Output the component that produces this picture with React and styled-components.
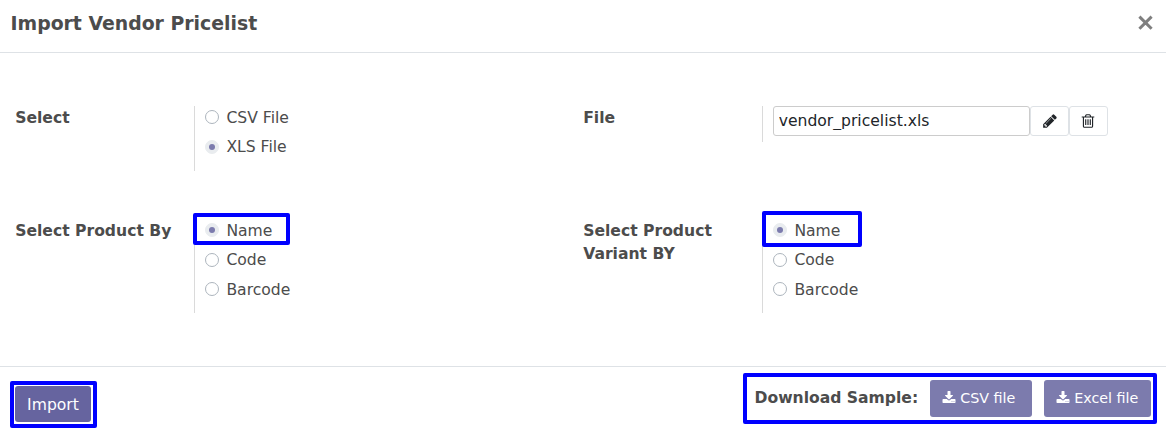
import React from "react";
import styled, { createGlobalStyle } from "styled-components";

const GlobalStyle = createGlobalStyle`
  *, *::before, *::after { box-sizing: border-box; }
  body {
    margin: 0;
    background: #fff;
    color: #4c4c4c;
    font: 15.6px/23px "DejaVu Sans", Verdana, sans-serif;
    overflow: hidden;
  }
  button, input { font: inherit; margin: 0; }
`;

const Dialog = styled.div`
  display: flex;
  flex-direction: column;
  width: 1166px;
  height: 445px;
`;

const Header = styled.header`
  display: flex;
  justify-content: space-between;
  height: 53px;
  padding: 9px 13px 0 10.5px;
  border-bottom: 1px solid #dee2e6;
`;

const Title = styled.h4`
  margin: 0;
  padding-top: 1px;
  font-size: 18.85px;
  line-height: 28px;
  font-weight: bold;
  white-space: nowrap;
`;

const Close = styled.button`
  width: 15px;
  height: 15px;
  margin-top: 6px;
  padding: 0;
  border: 0;
  background: none;
  color: #7f7f7f;
  svg { display: block; }
`;

const Body = styled.main`
  display: grid;
  grid-template-columns: 568px 1fr;
  grid-template-rows: 113px 1fr;
  flex: 1;
  padding: 53px 0 0 15px;
`;

const Field = styled.div`
  display: flex;
  align-items: flex-start;
`;

const FieldLabel = styled.div`
  width: 179px;
  padding: 1px 8px 0 0.2px;
  font-weight: bold;
`;

const FieldValue = styled.div`
  height: ${(p) => p.$height}px;
  padding-left: 10px;
  border-left: 1px solid #dadada;
`;

const Option = styled.label`
  position: relative;
  display: flex;
  align-items: center;
  height: 23px;
  margin-bottom: 6.4px;
  line-height: 25px;
  white-space: nowrap;
`;

const Radio = styled.span`
  display: grid;
  place-items: center;
  width: 14px;
  height: 14px;
  margin-right: 7.4px;
  border: 1px solid ${(p) => (p.$checked ? "#e9ecef" : "#adb5bd")};
  border-radius: 50%;
  background: ${(p) => (p.$checked ? "#e9ecef" : "#fff")};
  ${Option}:first-child > & { margin-bottom: 1px; }
  &::after {
    content: "";
    width: 6px;
    height: 6px;
    border-radius: 50%;
    background: ${(p) => (p.$checked ? "#7c7bad" : "transparent")};
  }
`;

const OptionText = styled.span`
  padding-top: 1.6px;
`;

const Highlight = styled.span`
  position: absolute;
  top: ${(p) => p.$top}px;
  left: ${(p) => p.$left}px;
  width: ${(p) => p.$width}px;
  height: ${(p) => p.$height}px;
  border: 4px solid #0000ff;
  border-radius: 2px;
  pointer-events: none;
`;

const FileRow = styled.div`
  display: flex;
`;

const FileInput = styled.input`
  width: 257px;
  height: 30px;
  padding: 0 5px 1px 4.7px;
  border: 1px solid #ccc;
  border-radius: 3px;
  color: #212529;
  outline: none;
`;

const IconButton = styled.button`
  display: grid;
  place-items: center;
  width: 39px;
  height: 30px;
  padding: 0 0 1px;
  border: 1px solid #dee2e6;
  border-radius: 3px;
  background: #fff;
  color: #212529;
  & + & { padding-right: 1px; }
`;

const Footer = styled.footer`
  display: flex;
  justify-content: space-between;
  align-items: flex-start;
  height: 79px;
  padding: 6px 9px 0 10px;
  border-top: 1px solid #dee2e6;
`;

const Frame = styled.div`
  display: flex;
  align-items: flex-start;
  width: ${(p) => p.$width}px;
  height: ${(p) => p.$height}px;
  margin-top: ${(p) => p.$top}px;
  padding: ${(p) => p.$pad};
  border: 4px solid #0000ff;
  border-radius: 2px;
`;

const ImportButton = styled.button`
  width: 76px;
  height: 36px;
  padding: 2px 0 0;
  border: 0;
  border-radius: 3px;
  background: #66649f;
  color: #fff;
`;

const SampleLabel = styled.b`
  flex: none;
  width: 175.5px;
  line-height: 36px;
  white-space: nowrap;
`;

const SampleButton = styled.button`
  display: flex;
  align-items: center;
  flex: none;
  gap: 4.7px;
  width: ${(p) => p.$width}px;
  height: 37px;
  margin-right: 12px;
  padding: 0 0 0 11.5px;
  border: 0;
  border-radius: 3px;
  background: #7c7bad;
  color: #fff;
  font-size: 14.3px;
  white-space: nowrap;
  svg { margin-bottom: 2px; }
`;

const paths = {
  pencil:
    "M491 1536l91-91-235-235-91 91v107h128v128h107zm523-928q0-22-22-22-10 0-17 7l-542 542q-7 7-7 17 0 22 22 22 10 0 17-7l542-542q7-7 7-17zm-54-192l416 416-832 832h-416v-416zm683 96q0 53-37 90l-166 166-416-416 166-165q36-38 90-38 53 0 91 38l235 234q37 39 37 91z",
  trash:
    "M704 736v576q0 14-9 23t-23 9h-64q-14 0-23-9t-9-23v-576q0-14 9-23t23-9h64q14 0 23 9t9 23zm256 0v576q0 14-9 23t-23 9h-64q-14 0-23-9t-9-23v-576q0-14 9-23t23-9h64q14 0 23 9t9 23zm256 0v576q0 14-9 23t-23 9h-64q-14 0-23-9t-9-23v-576q0-14 9-23t23-9h64q14 0 23 9t9 23zm128 724v-948h-896v948q0 22 7 40.5t14.5 27 10.5 8.5h832q3 0 10.5-8.5t14.5-27 7-40.5zm-672-1076h448l-48-117q-7-9-17-11h-317q-10 2-17 11zm928 32v64q0 14-9 23t-23 9h-96v948q0 83-47 143.5t-113 60.5h-832q-66 0-113-58.5t-47-141.5v-952h-96q-14 0-23-9t-9-23v-64q0-14 9-23t23-9h309l70-167q15-37 54-63t79-26h320q40 0 79 26t54 63l70 167h309q14 0 23 9t9 23z",
  download:
    "M1344 1344q0-26-19-45t-45-19-45 19-19 45 19 45 45 19 45-19 19-45zm256 0q0-26-19-45t-45-19-45 19-19 45 19 45 45 19 45-19 19-45zm128-224v320q0 40-28 68t-68 28h-1472q-40 0-68-28t-28-68v-320q0-40 28-68t68-28h465l135 136q58 56 136 56t136-56l136-136h464q40 0 68 28t28 68zm-325-569q17 41-14 70l-448 448q-18 19-45 19t-45-19l-448-448q-31-29-14-70 17-39 59-39h256v-448q0-26 19-45t45-19h256q26 0 45 19t19 45v448h256q42 0 59 39z",
};

const Icon = ({ name, size, viewBox = "0 0 1792 1792" }) => (
  <svg width={size} height={size} viewBox={viewBox} fill="currentColor" aria-hidden="true">
    <path d={paths[name]} />
  </svg>
);

const RadioGroup = ({ options, value, height, highlight }) => (
  <FieldValue $height={height}>
    {options.map((option) => (
      <Option key={option}>
        <Radio $checked={option === value} />
        <OptionText>{option}</OptionText>
        {highlight && option === value && <Highlight {...highlight} />}
      </Option>
    ))}
  </FieldValue>
);

const matchBy = ["Name", "Code", "Barcode"];

export default function App() {
  return (
    <>
      <GlobalStyle />
      <Dialog>
        <Header>
          <Title>Import Vendor Pricelist</Title>
          <Close aria-label="Close">
            <svg width="15" height="15" viewBox="0 0 15 15" stroke="currentColor" strokeWidth="3" fill="none">
              <path d="M1.4 1.6L13.6 13.8M13.6 1.6L1.4 13.8" />
            </svg>
          </Close>
        </Header>
        <Body>
          <Field>
            <FieldLabel>Select</FieldLabel>
            <RadioGroup options={["CSV File", "XLS File"]} value="XLS File" height={65} />
          </Field>
          <Field>
            <FieldLabel>File</FieldLabel>
            <FieldValue $height={36}>
              <FileRow>
                <FileInput defaultValue="vendor_pricelist.xls" readOnly />
                <IconButton aria-label="Edit">
                  <Icon name="pencil" size={16} />
                </IconButton>
                <IconButton aria-label="Delete">
                  <Icon name="trash" size={16} />
                </IconButton>
              </FileRow>
            </FieldValue>
          </Field>
          <Field>
            <FieldLabel>Select Product By</FieldLabel>
            <RadioGroup
              options={matchBy}
              value="Name"
              height={94}
              highlight={{ $top: -6, $left: -12, $width: 97, $height: 32 }}
            />
          </Field>
          <Field>
            <FieldLabel>Select Product Variant BY</FieldLabel>
            <RadioGroup
              options={matchBy}
              value="Name"
              height={94}
              highlight={{ $top: -8, $left: -11, $width: 100, $height: 36 }}
            />
          </Field>
        </Body>
        <Footer>
          <Frame $width={87} $height={47} $top={8} $pad="1px">
            <ImportButton>Import</ImportButton>
          </Frame>
          <Frame $width={414} $height={51} $top={0} $pad="3px 0 0 7.5px">
            <SampleLabel>Download Sample:</SampleLabel>
            <SampleButton $width={102}>
              <Icon name="download" size={14} />
              CSV file
            </SampleButton>
            <SampleButton $width={107}>
              <Icon name="download" size={14} />
              Excel file
            </SampleButton>
          </Frame>
        </Footer>
      </Dialog>
    </>
  );
}
